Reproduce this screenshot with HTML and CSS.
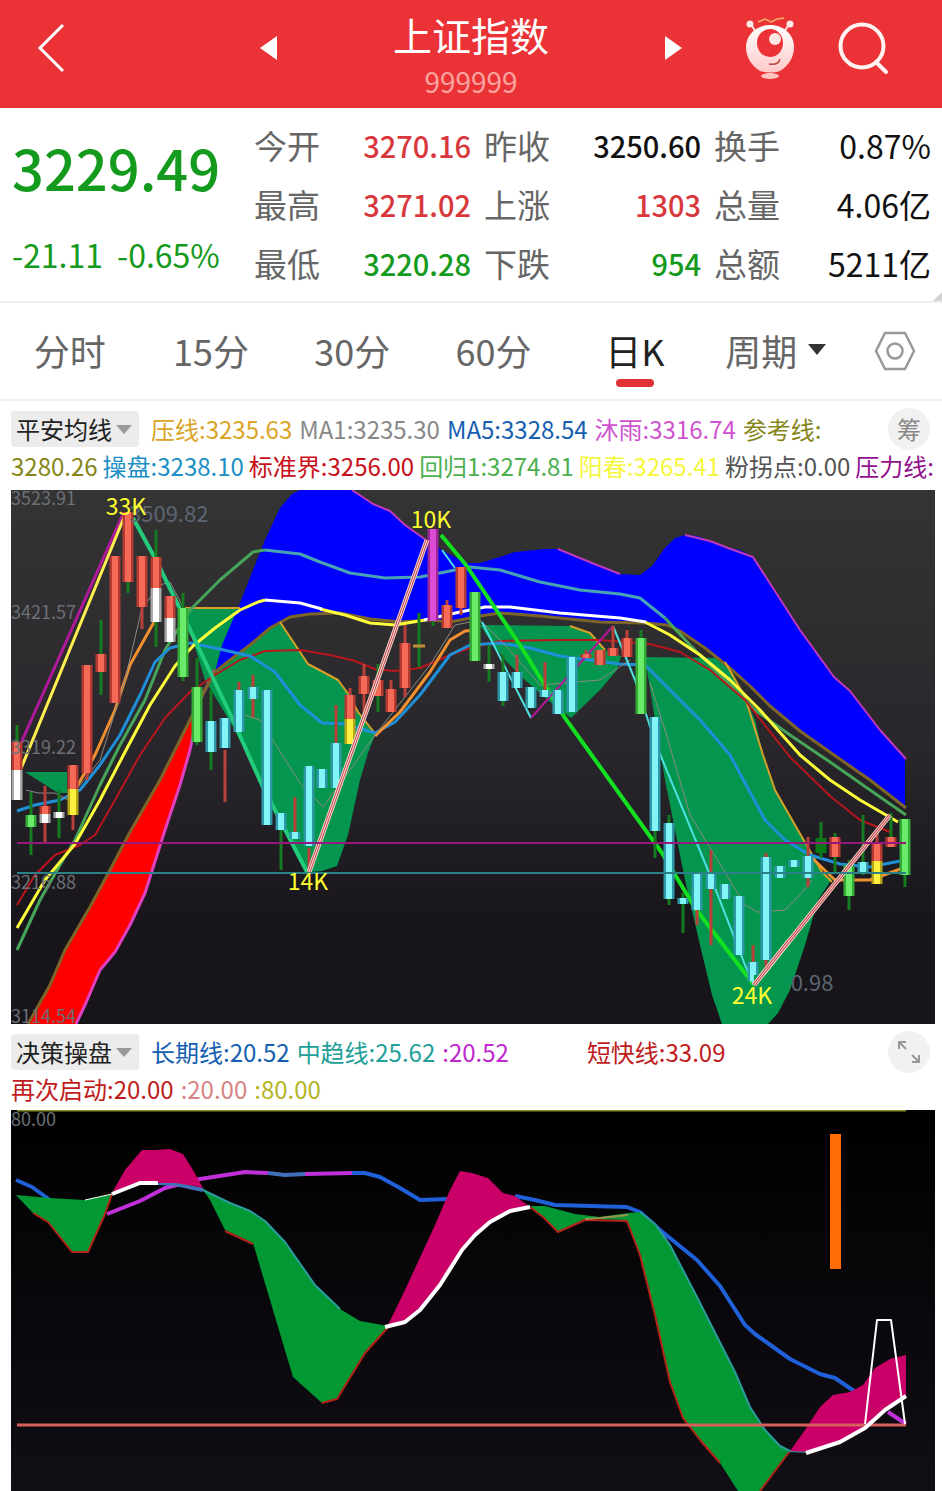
FILE: index.html
```html
<!DOCTYPE html>
<html lang="zh-CN">
<head>
<meta charset="utf-8">
<meta name="viewport" content="width=device-width, initial-scale=1">
<title>上证指数 999999</title>
<link rel="stylesheet" href="styles.css">
</head>
<body>
<header class="topbar">
  <div class="topbar-side">
    <button class="icon-btn" aria-label="返回"><svg width="30" height="54" viewBox="0 0 30 54"><path d="M27 4 4 27 27 50" fill="none" stroke="#fff" stroke-width="3"/></svg></button>
    <button class="icon-btn" aria-label="上一个"><svg width="18" height="26" viewBox="0 0 18 26"><path d="M17 1v24L0 13z" fill="#fff"/></svg></button>
  </div>
  <div class="topbar-title">
    <h1>上证指数</h1>
    <p>999999</p>
  </div>
  <div class="topbar-side">
    <button class="icon-btn" aria-label="下一个"><svg width="18" height="26" viewBox="0 0 18 26"><path d="M1 1v24l17-12z" fill="#fff"/></svg></button>
    <div class="topbar-tools">
    <button class="icon-btn" aria-label="助手">
      <svg width="50" height="64" viewBox="0 0 50 64">
        <defs><linearGradient id="mascot" x2="0" y2="1"><stop offset="0" stop-color="#fff"/><stop offset="1" stop-color="#ffc9c9"/></linearGradient></defs>
        <path d="M5 7l6 9M45 7l-6 9" stroke="#ffe3e0" stroke-width="2"/>
        <circle cx="5" cy="8" r="3.500" fill="#ffe9e6"/><circle cx="45" cy="8" r="3.500" fill="#ffe9e6"/>
        <path d="M13 6 20 3 26 6 32 3 39 2" fill="none" stroke="#f8b070" stroke-width="1.500"/>
        <path d="M25 9C11 9 1 19 1 31c0 11 6 19 14 24 6 2 14 2 20 0 8-5 14-13 14-24C49 19 39 9 25 9z" fill="url(#mascot)"/>
        <ellipse cx="25" cy="27" rx="13" ry="14" fill="#eb3236"/>
        <circle cx="30" cy="23" r="6" fill="#ffe6e3"/>
        <path d="M24 48c6 1 10-1 11-5" fill="none" stroke="#b94848" stroke-width="1.500"/>
        <ellipse cx="25" cy="60" rx="9" ry="3" fill="#ffc4c0"/>
      </svg>
    </button>
    <button class="icon-btn" aria-label="搜索"><svg width="52" height="54" viewBox="0 0 52 54"><circle cx="24" cy="25" r="21.500" fill="none" stroke="#fff3f1" stroke-width="4"/><path d="M38 41l10 10" stroke="#fff3f1" stroke-width="4" stroke-linecap="round"/></svg></button>
    </div>
  </div>
</header>

<main>
<section class="quote">
  <div class="price">
    <p class="last down">3229.49</p>
    <p class="change down"><span>-21.11</span><span>-0.65%</span></p>
  </div>
  <dl class="stats">
    <div><dt>今开</dt><dd class="up">3270.16</dd></div>
    <div><dt>昨收</dt><dd>3250.60</dd></div>
    <div><dt>换手</dt><dd class="wide">0.87%</dd></div>
    <div><dt>最高</dt><dd class="up">3271.02</dd></div>
    <div><dt>上涨</dt><dd class="up">1303</dd></div>
    <div><dt>总量</dt><dd class="wide">4.06亿</dd></div>
    <div><dt>最低</dt><dd class="down">3220.28</dd></div>
    <div><dt>下跌</dt><dd class="down">954</dd></div>
    <div><dt>总额</dt><dd class="wide">5211亿</dd></div>
  </dl>
  <i class="corner"></i>
</section>

<nav class="tabs">
  <button>分时</button>
  <button>15分</button>
  <button>30分</button>
  <button>60分</button>
  <button class="active">日K</button>
  <button>周期<svg width="20" height="12" viewBox="0 0 20 12"><path d="M1 0h18l-9 11z" fill="#333"/></svg></button>
  <button aria-label="设置"><svg width="42" height="42" viewBox="0 0 42 42" fill="none" stroke="#999" stroke-width="2.500"><path d="M11 3h20l9 18-9 18H11L2 21z"/><circle cx="21" cy="21" r="7.500"/></svg></button>
</nav>

<section class="panel">
  <div class="legend legend-main">
    <div class="legend-row">
      <button class="picker">平安均线<svg width="16" height="9" viewBox="0 0 16 9"><path d="M0 0h16l-8 9z" fill="#999"/></svg></button>
      <span class="c-gold">压线:3235.63</span><span class="c-gray">MA1:3235.30</span><span class="c-blue">MA5:3328.54</span><span class="c-orchid">沐雨:3316.74</span><span class="c-olive">参考线:</span>
      <button class="chip">筹</button>
    </div>
    <div class="legend-row dense">
      <span class="c-olive">3280.26</span><span class="c-sky">操盘:3238.10</span><span class="c-red">标准界:3256.00</span><span class="c-green">回归1:3274.81</span><span class="c-yellow">阳春:3265.41</span><span class="c-dark">粉拐点:0.00</span><span class="c-purple">压力线:</span>
    </div>
  </div>
  <svg class="chart" viewBox="11 490 924 534" role="img" aria-label="日K线图">
    <defs>
      <linearGradient id="bg1" x2="0" y2="1"><stop offset="0" stop-color="#343434"/><stop offset=".5" stop-color="#29262b"/><stop offset=".8" stop-color="#18151b"/><stop offset="1" stop-color="#17141a"/></linearGradient>
      <path id="k-red" d="M17 742V770M73 765V789M87 665V773M101 654V672M115 556V703M128 512V582M142 556V607M156 557V588M170 596V618M350 695V719M364 676V694M378 680V696M391 689V712M405 643V688M447 605V628M461 567V608M586 654V658M600 650V665M613 648V656M627 638V657M45 806V814M835 837V857M877 843V861M891 837V847"/>
      <path id="k-white" d="M17 770V800M156 588V622M170 618V642M45 814V823M59 812V818M489 664V669"/>
      <path id="k-green" d="M31 815V827M183 608V677M197 687V742M475 592V661M641 638V714M849 865V896M905 819V875"/>
      <path id="k-yellow" d="M73 789V815M350 719V744M877 861V884"/>
      <path id="k-cyan" d="M211 721V752M225 718V748M239 690V732M253 687V699M267 690V825M281 813V830M295 832V839M309 766V846M322 769V788M336 743V788M503 672V701M517 672V688M531 687V708M545 690V697M558 690V714M572 657V712M655 717V831M669 823V899M683 898V904M697 874V910M711 872V889M725 884V899M739 896V955M753 962V981M766 857V960M780 866V878M794 860V867M808 856V878M863 862V872"/>
    </defs>
    <path d="M11 490h924v534H11z" fill="url(#bg1)"/>
    <g fill="#04964f">
      <path d="M25 772H67V793L58 793z"/>
      <path d="M183 608H242L262 622H280L308 664 325 673 338 680 349 695 358 712 375 735 368 753 360 780 348 835 337 866 322 871 309 872 270 800 245 750 232 725 205 680z"/>
      <path d="M480 625 570 626 590 633 605 650 621 656 617 670 600 690 571 718 555 706 525 680 505 660 490 640z"/>
      <path d="M645 657 718 658 730 668 745 697 755 720 763 755 775 790 795 825 810 850 822 872 832 879 818 900 805 945 790 990 778 1013 768 1024H722L712 995 700 945 685 880 675 830 665 780 655 720z"/>
    </g>
    <path d="M215 672 222 645 240 603 255 565 265 540 280 508 292 494 300 490H352L373 504 390 511 405 525 426 540 445 552 466 563 480 563 500 557 515 552 545 549 558 549 575 556 592 563 608 569 620 574 640 575 652 566 665 548 675 538 685 535 697 536 710 541 728 548 740 550 753 557 770 584 800 630 834 677 850 691 880 730 905 758V806L870 780 834 755 800 731 770 706 750 686 730 668 705 648 680 631 667 625 645 623 600 622 570 619 540 616 515 614 500 613 480 616 450 622 432 620 400 622 370 619 340 613 310 614 290 617 270 628 250 645 230 660z" fill="#00f"/>
    <path d="M28 1024 50 985 65 950 90 907 110 870 130 832 160 780 180 740 196 706 190 750 180 785 165 830 145 893 130 925 115 952 100 970 85 1005 76 1024z" fill="red"/>
    <g class="ln">
      <path d="M352 490 373 504 390 511 405 525 426 540M558 549 592 563 620 574M685 535 710 541 728 548 753 557 800 630 834 677 850 691 880 730 906 759" stroke="#c03ab8" stroke-width="2"/>
      <path d="M76 1024 85 1005 100 970 115 952 130 925 145 893 165 830 180 785 190 750 200 700 215 670" stroke="#e040c0" stroke-width="3"/>
      <path d="M28 1024 50 985 65 950 90 907 110 870 130 832 160 780 180 740 205 690 215 672 230 660 250 645 270 628 290 617 310 614 340 613 370 619 400 622 432 620 450 622 480 616 500 613 540 616 570 619 600 622 645 623 667 625 680 631 705 648 730 668 750 686 770 706 800 731 834 755 870 780 906 808" stroke="#7d6428" stroke-width="3"/>
      <path d="M185 608H240M280 622 308 664 325 673 338 680 349 695 358 712 377 736M570 626 590 633 605 650M725 662 745 697 763 755 775 790 795 825 822 872 832 882" stroke="#d8a028" stroke-width="2"/>
      <path d="M17 950 40 900 60 865 75 840 100 785 120 745 145 700 165 650 190 610 220 580 253 552 265 550M665 618 690 645 720 675 755 710 790 735 830 762 870 790 906 815" stroke="#46a558" stroke-width="3"/>
      <path d="M265 550 300 554 320 562 350 573 385 578 420 577 450 571 470 567 500 570 540 582 580 590 620 594 640 598 665 618" stroke="#48a4b4" stroke-width="3"/>
      <path d="M17 905 35 875 55 855 80 845 95 835 115 800 140 755 165 718 190 692 215 675 240 660 265 651 300 650 330 655 355 661 375 669 395 671 420 668 450 655 470 648 500 641 560 640 600 640 650 644 680 652 710 670 745 700 790 757 830 796 860 820 890 832" stroke="#b8161c" stroke-width="2"/>
      <path d="M17 811 35 805 60 800 80 790 100 765 120 735 140 695 155 662 170 648 190 643 215 648 250 656 275 672 300 705 322 723 345 724 375 733 395 722 420 695 450 655 470 645 500 643 530 648 560 656 590 660 620 664 645 665 670 690 700 720 730 755 765 820 785 840 810 855 840 864 870 867 900 861" stroke="#1f8fd8" stroke-width="3"/>
      <path d="M75 790 95 755 115 710 130 665 154 622M375 736 400 712 430 672 450 640 465 631 480 630M812 858 835 880 870 880 906 867" stroke="#f09030" stroke-width="3"/>
      <path d="M26 790 38 793 55 793 68 800 100 760 125 680 142 608 160 585 170 582 183 607M245 715 260 720 300 783 323 807 350 770 375 735 430 665 455 625 480 620 505 645 540 685 600 680 630 660M650 683 665 730 690 815 745 905 757 912 785 910 800 895 812 880" stroke="#8d8a80"/>
      <path d="M17 928 45 880 75 844 100 800 125 752 150 705 175 666 193 646 215 628 240 610 258 602 265 600M320 609 345 615 370 623 395 625 425 620M645 622 670 635 700 655 730 680 760 710 800 755 830 780 860 800 898 822" stroke="#ffff3c" stroke-width="3"/>
      <path d="M265 600 300 603 322 609M424 620 460 612 485 607 510 607 560 613 620 618 646 622" stroke="#fff" stroke-width="3"/>
      <path d="M17 752 123 514" stroke="#b0189c" stroke-width="3"/>
      <path d="M20 771 125 515" stroke="#ffef50" stroke-width="3"/>
      <path d="M133 518 156 560 183 615 232 718 262 785 307 872" stroke="#22cc7c" stroke-width="4"/>
      <path d="M441 535 466 565 520 645 565 718 662 853 695 908 754 985" stroke="#12e020" stroke-width="4"/>
      <path d="M442 550 455 568M482 622 531 718M613 626 635 680 655 742 710 875 745 965 754 985" stroke="#4ce0e0" stroke-width="2"/>
      <path d="M531 718 613 626" stroke="#b0189c" stroke-width="2"/>
    </g>
    <g class="ln" stroke-width="3">
      <path d="M142 607V629M45 786V844M73 790V830M87 773V780M225 750V802M295 797V832M309 848V875M336 705V745M350 688V697M364 664V722M391 680V690M405 625V697M447 600V606M461 608V615M517 655V672M545 662V690M613 626V648M627 630V638M711 850V945M697 905V925M753 945V962M766 853V858M766 958V968M239 682V690M253 675V717M808 837V887M877 833V843M586 650V658" stroke="#b8403a"/>
      <path d="M17 725V742M31 792V855M59 790V838M101 620V695M128 582V593M156 530V560M156 622V647M183 593V681M197 658V745M211 690V770M281 830V870M378 664V712M419 613V667M433 600V626M489 645V682M503 655V706M641 630V640M655 830V858M669 815V905M683 893V933M821 822V858M835 833V872M849 860V910M863 815V875M891 813V840M905 870V887" stroke="#167a20"/>
      <path d="M413 646H425" stroke="#c09038"/>
    </g>
    <g class="body-edge">
      <use href="#k-red" stroke="#b43a32"/><use href="#k-white" stroke="#aaa"/><use href="#k-green" stroke="#34aa38"/><use href="#k-yellow" stroke="#b8a818"/><use href="#k-cyan" stroke="#2f98a8"/><path d="M433 529V621" stroke="#9c2898"/><path d="M821 838V853" stroke="#087818"/>
    </g>
    <g class="body-core">
      <use href="#k-red" stroke="#f46a56"/><use href="#k-white" stroke="#fff"/><use href="#k-green" stroke="#6aec6a"/><use href="#k-yellow" stroke="#fff040"/><use href="#k-cyan" stroke="#80f4f6"/><path d="M433 529V621" stroke="#dc4cd4"/>
    </g>
    <g class="ln">
      <path d="M309 872 427 540M754 985 890 815" stroke="#e8d8cc" stroke-width="5"/>
      <path d="M309 872 427 540M754 985 890 815" stroke="#cc4850" stroke-width="3"/>
      <path d="M309 872 427 540M754 985 890 815" stroke="#fff0e4"/>
      <path d="M17 843H906" stroke="#96187c" stroke-width="2"/>
      <path d="M17 873H906" stroke="#2c8088" stroke-width="2"/>
    </g>
    <g class="axis">
      <text x="11" y="505">3523.91</text><text x="11" y="619">3421.57</text><text x="11" y="754">3319.22</text><text x="11" y="889">3216.88</text><text x="11" y="1023">3114.54</text>
    </g>
    <g class="ghost"><text x="129" y="522">3509.82</text><text x="754" y="991">3130.98</text></g>
    <path d="M754 975H789V990L778 1010 754 988z" fill="#04964f"/>
    <path d="M754 985 789 941" stroke="#e8d8cc" stroke-width="5"/><path d="M754 985 789 941" stroke="#cc4850" stroke-width="3"/><path d="M754 985 789 941" stroke="#fff0e4"/>
    <g class="mark"><text x="126" y="515">33K</text><text x="431" y="528">10K</text><text x="308" y="890">14K</text><text x="752" y="1004">24K</text></g>
  </svg>
</section>

<section class="panel">
  <div class="legend legend-sub">
    <div class="legend-row">
      <button class="picker">决策操盘<svg width="16" height="9" viewBox="0 0 16 9"><path d="M0 0h16l-8 9z" fill="#999"/></svg></button>
      <span class="c-blue">长期线:20.52</span><span class="c-teal">中趋线:25.62</span><span class="c-magenta">:20.52</span><span class="c-crimson spaced">短快线:33.09</span>
      <button class="chip" aria-label="全屏"><svg width="24" height="24" viewBox="0 0 24 24" fill="none" stroke="#999" stroke-width="2"><path d="M2 9V2h7M2 2l7 7M22 15v7h-7M22 22l-7-7"/></svg></button>
    </div>
    <div class="legend-row">
      <span class="c-crimson">再次启动:20.00</span><span class="c-rose">:20.00</span><span class="c-lime">:80.00</span>
    </div>
  </div>
  <svg class="chart" viewBox="11 1110 924 381" role="img" aria-label="决策操盘指标图">
    <defs><linearGradient id="bg2" x2="0" y2="1"><stop offset="0" stop-color="#000"/><stop offset="1" stop-color="#110e15"/></linearGradient></defs>
    <path d="M11 1110h924v381H11z" fill="url(#bg2)"/>
    <g class="axis"><text x="11" y="1126">80.00</text></g>
    <g class="ln" stroke-width="4">
      <path d="M16 1180 32 1187 50 1200M352 1173 365 1173 380 1177 400 1188 420 1200 448 1199M515 1196 535 1200 555 1205 627 1207 640 1212 660 1230 697 1260 720 1286 745 1325 755 1334 790 1359 820 1374 835 1378 857 1393" stroke="#2060d8"/>
      <path d="M107 1214 140 1201 165 1188 200 1179 245 1172 268 1173M305 1174 352 1173M888 1412 906 1424" stroke="#c030d8"/>
      <path d="M268 1173 285 1175 305 1174M158 1183 175 1184 203 1190" stroke="#3f70b8"/>
    </g>
    <g fill="#029834">
      <path d="M16 1195 50 1198 85 1200 112 1194 105 1214 88 1251 72 1251 48 1222 33 1213z"/>
      <path d="M203 1190 230 1203 250 1211 265 1221 285 1242 315 1285 340 1309 360 1321 388 1326 365 1352 337 1398 322 1403 293 1377 270 1300 253 1243 225 1230 210 1200z"/>
      <path d="M530 1206 545 1206 575 1214 600 1217 628 1213 640 1212 655 1224 670 1245 697 1297 735 1372 750 1407 765 1430 780 1446 790 1451 775 1470 760 1491H738L720 1463 700 1440 683 1418 670 1382 655 1315 640 1255 627 1220 585 1219 558 1232 543 1217z"/>
    </g>
    <g class="ln">
      <path d="M33 1213 48 1222 72 1252 88 1252 105 1214 112 1194M225 1231 253 1244M322 1403 337 1399 365 1353 390 1325M530 1207 543 1217 558 1232 585 1220 627 1221 640 1255 655 1315 670 1382 683 1418 700 1440 720 1463M760 1491 775 1471 790 1451" stroke="#b42418" stroke-width="2"/>
      <path d="M203 1190 230 1203 250 1211 265 1221 285 1242 315 1285 340 1309M640 1212 655 1224 670 1245 697 1297 735 1372 750 1407 765 1430 780 1446 790 1451 808 1452" stroke="#2c9c9c" stroke-width="2"/>
    </g>
    <g fill="#ca0068">
      <path d="M112 1193 125 1170 142 1150 155 1150 170 1149 183 1154 193 1170 203 1188 195 1186 175 1183 155 1183 140 1184z"/>
      <path d="M388 1325 405 1290 435 1225 450 1190 460 1171 472 1173 488 1178 503 1193 515 1196 530 1207 510 1211 490 1222 470 1240 440 1285 420 1310 405 1322z"/>
      <path d="M790 1451 805 1430 820 1407 833 1395 850 1392 863 1385 875 1368 890 1359 906 1355V1396L885 1410 865 1428 840 1442 808 1452z"/>
    </g>
    <g class="ln">
      <path d="M17 1425H906" stroke="#d8605c" stroke-width="3"/>
      <path d="M85 1200 112 1194" stroke="#fff"/>
      <path d="M112 1194 140 1183 158 1183M385 1327 405 1322 420 1310 440 1285 462 1250 475 1235 490 1222 510 1211 530 1207M806 1453 840 1442 865 1428 885 1410 906 1396" stroke="#fff" stroke-width="4"/>
      <path d="M585 1219 600 1218 628 1215" stroke="#a09050" stroke-width="2"/>
      <path d="M865 1424 877 1320H891L905 1424" stroke="#fff" stroke-width="2"/>
      <path d="M17 1110H906" stroke="#8a9020" stroke-width="3"/>
    </g>
    <path d="M830 1134h11v135h-11z" fill="#ff6c08"/>
  </svg>
</section>
</main>
</body>
</html>
```
FILE: styles.css
```css
* { box-sizing: border-box; }
body, h1, p, dl, dd { margin: 0; }
body {
  background: #fff;
  color: #111;
  font-family: "Noto Sans CJK SC", "Noto Sans", sans-serif;
  overflow-x: hidden;
}
button {
  border: 0;
  padding: 0;
  background: none;
  color: inherit;
  font: inherit;
  cursor: pointer;
}
svg { display: block; }

.topbar {
  display: grid;
  grid-template-columns: 1fr 41% 1fr;
  align-items: start;
  height: 108px;
  background: #eb3236;
  color: #fff;
}
.topbar-side {
  display: flex;
  align-items: center;
  justify-content: space-between;
  height: 96px;
}
.topbar-side:first-child { padding-left: 36px; }
.topbar-side:last-child { padding-right: 52px; }
.topbar-tools {
  display: flex;
  align-items: center;
  gap: 43px;
}
.topbar-title { text-align: center; }
.topbar-title h1 {
  padding-top: 6px;
  font-size: 39px;
  font-weight: 400;
  line-height: 56px;
}
.topbar-title p {
  color: #f9a39f;
  font-size: 28px;
  line-height: 38px;
}

.quote {
  position: relative;
  display: grid;
  grid-template-columns: 242px 1fr;
  height: 195px;
  padding: 7px 11px 0 12px;
  border-bottom: 2px solid #efefef;
}
.last {
  padding-top: 14px;
  font-size: 56px;
  font-weight: 500;
  line-height: 76px;
}
.change {
  display: flex;
  gap: 14px;
  padding-top: 25px;
  font-size: 32px;
  line-height: 48px;
  white-space: nowrap;
}
.stats {
  display: grid;
  grid-template-columns: repeat(3, 1fr);
  grid-auto-rows: 59px;
  column-gap: 13px;
}
.stats div {
  display: flex;
  align-items: center;
  justify-content: space-between;
  white-space: nowrap;
}
.stats dt { color: #666; font-size: 33px; }
.stats dd { font-size: 29px; font-weight: 500; }
.stats .wide { font-size: 32px; font-weight: 400; }
.up { color: #d8383c; }
.down { color: #149a1c; }
.corner {
  position: absolute;
  right: 0;
  bottom: 0;
  border: solid transparent;
  border-width: 0 0 9px 9px;
  border-bottom-color: #d4d4d4;
}

.tabs {
  display: grid;
  grid-template-columns: repeat(6, 3fr) 2fr;
  height: 98px;
  border-bottom: 2px solid #efefef;
  color: #666;
  font-size: 36px;
}
.tabs button {
  position: relative;
  display: flex;
  align-items: center;
  justify-content: center;
  gap: 10px;
  padding: 0 2px 3px 0;
  white-space: nowrap;
}
.tabs button:last-child { padding: 0; }
.tabs .active { color: #222; }
.tabs .active::after {
  content: "";
  position: absolute;
  bottom: 12px;
  width: 38px;
  height: 8px;
  border-radius: 4px;
  background: #e03236;
}

.legend {
  display: grid;
  grid-template-columns: minmax(0, 1fr);
  grid-auto-rows: 36px;
  row-gap: 1px;
  padding-left: 11px;
  padding-right: 12px;
  font-size: 24px;
  line-height: 36px;
}
.legend-main { padding-top: 10px; padding-bottom: 6px; }
.legend-sub { padding-top: 10px; padding-bottom: 3px; }
.legend-row {
  display: flex;
  align-items: center;
  gap: 7px;
  white-space: nowrap;
}
.legend-row.dense { gap: 5px; }
.picker {
  display: flex;
  align-items: center;
  gap: 4px;
  height: 36px;
  margin-right: 5px;
  padding: 0 7px 0 5px;
  border-radius: 3px;
  background: #ececec;
  color: #222;
}
.chip {
  display: grid;
  place-items: center;
  width: 42px;
  height: 42px;
  margin-left: auto;
  border-radius: 50%;
  background: #f1f1f1;
  color: #888;
  flex: none;
}
.spaced { margin-left: 71px; }
.c-gold { color: #dba426; }
.c-gray { color: #888; }
.c-blue { color: #1560b0; }
.c-orchid { color: #cf52d0; }
.c-olive { color: #858518; }
.c-sky { color: #1c8fc4; }
.c-red { color: #c8101a; }
.c-green { color: #4cb050; }
.c-yellow { color: #f6f63c; }
.c-dark { color: #555; }
.c-purple { color: #92108c; }
.c-teal { color: #22a09a; }
.c-magenta { color: #c028cc; }
.c-crimson { color: #c01c1c; }
.c-rose { color: #d88484; }
.c-lime { color: #b4b424; }

.chart { width: calc(100% - 18px); height: auto; margin-left: 11px; }
.chart .axis { fill: #6c7076; font-size: 18px; }
.chart .ghost { fill: #5c6672; font-size: 22px; }
.chart .mark { fill: #ffff30; font-size: 23px; text-anchor: middle; }
.ln { fill: none; stroke-linejoin: round; }
.body-edge { fill: none; stroke-width: 11px; }
.body-core { fill: none; stroke-width: 6px; }
```
